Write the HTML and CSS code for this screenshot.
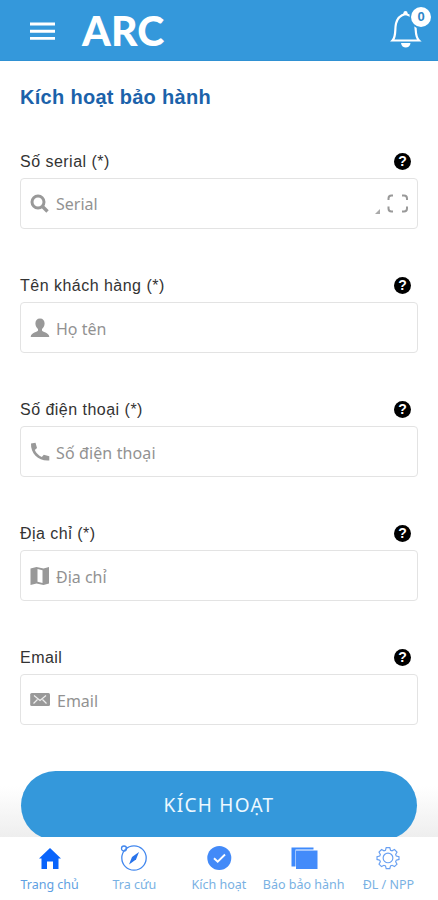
FILE: index.html
```html
<!DOCTYPE html>
<html lang="vi">
<head>
<meta charset="utf-8">
<meta name="viewport" content="width=device-width, initial-scale=1">
<title>ARC</title>
<link rel="stylesheet" href="styles.css">
</head>
<body>
<div class="app">
  <header class="topbar">
    <svg class="menu" viewBox="0 0 26 20"><path d="M0 3h25M0 10.200h25M0 17.400h25" stroke="#fff" stroke-width="2.900"/></svg>
    <span class="brand">ARC</span>
    <div class="bell">
      <svg width="34" height="40" viewBox="0 0 34 40"><path d="M3.500 30.500C7.500 26 5.500 20 7 13.500C8.300 8 12 5 16.500 4C21 5 25 8 26 13.500C27.500 20 25.500 26 30 30.500Z" fill="none" stroke="#fff" stroke-width="2.200"/><circle cx="16.500" cy="3.200" r="2.100" fill="#fff"/><path d="M12 33h9.500c-.5 6-9 6-9.500 0z" fill="#fff"/></svg>
      <span class="count">0</span>
    </div>
  </header>
  <main class="content">
    <h1 class="title">Kích hoạt bảo hành</h1>
    <section class="group">
      <div class="caption"><span class="label">Số serial (*)</span><span class="help">?</span></div>
      <div class="field">
        <svg class="icon" viewBox="0 0 20 20"><circle cx="8" cy="8" r="6" fill="none" stroke="#999" stroke-width="3"/><path d="M12.500 12.500l5 5" stroke="#999" stroke-width="3.400"/></svg>
        <span class="hint h-serial">Serial</span>
        <svg class="scan" width="36" height="26" viewBox="0 0 36 26"><path d="M6 18v5H1z" fill="#aaa"/><path d="M14.500 9V7.500q0-3 3-3H19M28 4.500h2q3 0 3 3V9M33 15.500v2q0 3-3 3h-2M19 20.500h-1.500q-3 0-3-3v-2" fill="none" stroke="#999" stroke-width="2"/></svg>
      </div>
    </section>
    <section class="group">
      <div class="caption"><span class="label">Tên khách hàng (*)</span><span class="help">?</span></div>
      <div class="field">
        <svg class="icon" viewBox="0 0 20 20"><path d="M10 .5c3 0 4.600 2 4.600 5 0 2.500-1.300 4.500-2.600 5.500v1.600c0 1.600 7 1.800 7.300 6.400H.7c.3-4.600 7.300-4.800 7.300-6.400V11C6.700 10 5.400 8 5.400 5.500c0-3 1.600-5 4.600-5z" fill="#999"/></svg>
        <span class="hint">Họ tên</span>
      </div>
    </section>
    <section class="group">
      <div class="caption"><span class="label">Số điện thoại (*)</span><span class="help">?</span></div>
      <div class="field">
        <svg class="icon" viewBox="0 0 20 20"><path d="M1 1.500L5.500.8 7 6 4.800 8c1.300 3 3.800 5.500 7 7l2-2.300 5.500 1.600v4.200C9 19.500.5 12 1 1.500z" fill="#999"/></svg>
        <span class="hint h-phone">Số điện thoại</span>
      </div>
    </section>
    <section class="group">
      <div class="caption"><span class="label">Địa chỉ (*)</span><span class="help">?</span></div>
      <div class="field">
        <svg class="icon" viewBox="0 0 20 20"><path d="M.5 2.500L6.500 1l7 1.500L19 1v16.500L13.500 19l-7-1.500L.5 19z" fill="#999"/><path d="M7.500 3l5 1.200V17l-5-1.200z" fill="#fff"/></svg>
        <span class="hint">Địa chỉ</span>
      </div>
    </section>
    <section class="group">
      <div class="caption"><span class="label">Email</span><span class="help">?</span></div>
      <div class="field">
        <svg class="icon" viewBox="0 0 20 20"><rect x=".2" y="3" width="19.800" height="13" rx="1.500" fill="#999"/><path d="M4 5.500l6 5 6-5M3.500 13.500l4-4M16.500 13.500l-4-4" fill="none" stroke="#eee" stroke-width="1.200"/></svg>
        <span class="hint h-email">Email</span>
      </div>
    </section>
    <div class="action"><button class="submit">KÍCH HOẠT</button></div>
  </main>
  <nav class="tabs">
    <a class="tab tab-home"><svg width="30" height="30" viewBox="0 0 30 30"><path d="M15 5l11 10.500h-2.500V26H18v-7.500h-6V26H6.500V15.500H4z" fill="#0964fb"/></svg><span>Trang chủ</span></a>
    <a class="tab"><svg width="30" height="30" viewBox="0 0 30 30"><g fill="none" stroke="#4388ee" stroke-width="1.300"><circle cx="15" cy="15" r="12.200"/><circle cx="5" cy="5.500" r="2.500"/></g><path d="M20 9l-3 7.500-7 5 3-7.500z" fill="#2873ea"/></svg><span>Tra cứu</span></a>
    <a class="tab"><svg width="30" height="30" viewBox="0 0 30 30"><circle cx="15.300" cy="15" r="12" fill="#438af8"/><path d="M10 15.200l3.700 3.500 7.300-7.200" fill="none" stroke="#fff" stroke-width="1.900"/></svg><span>Kích hoạt</span></a>
    <a class="tab"><svg width="30" height="30" viewBox="0 0 30 30"><path d="M2.500 4.500h22v2h-18v17h-4z" fill="#3e8afc"/><path d="M7 7.500h21.500V26H7z" fill="#438bfa"/></svg><span>Báo bảo hành</span></a>
    <a class="tab"><svg width="30" height="30" viewBox="0 0 30 30"><g transform="translate(1.500 .5) scale(.9)" fill="none" stroke="#69a0f2" stroke-width="1.300"><path d="M13 4.500h4l.8 3 1.700.7 2.700-1.500 2.800 2.800-1.500 2.700.7 1.700 3 .8v3l-3 .8-.7 1.700 1.500 2.700-2.800 2.800-2.700-1.500-1.700.7-.8 3h-4l-.8-3-1.700-.7-2.700 1.500L5 22.900l1.500-2.700-.7-1.700-3-.8v-3l3-.8.7-1.700L5 9.500l2.800-2.800 2.700 1.500 1.700-.7z"/><circle cx="15" cy="16" r="5.400"/></g></svg><span>ĐL / NPP</span></a>
  </nav>
</div>
</body>
</html>
```
FILE: styles.css
```css
* { box-sizing: border-box; }
body { margin: 0; background: #fff; font-family: "Liberation Sans", sans-serif; }
.app { height: 900px; display: flex; flex-direction: column; overflow: hidden; }
.topbar { height: 61px; flex: none; display: flex; align-items: center; padding: 0 5px 0 30px; background: #3498db; border-bottom: 1px solid #2f91d3; color: #fff; }
.menu { width: 26px; height: 20px; margin-top: 1px; }
.brand { margin-left: 26px; font: 900 41px/60px Lato, sans-serif; letter-spacing: .2px; padding-top: 1px; }
.bell { margin-left: auto; position: relative; width: 44px; height: 40px; }
.bell svg { display: block; }
.count { position: absolute; left: 22px; top: -3px; width: 20px; height: 20px; border-radius: 50%; background: #fff; box-shadow: 0 0 0 1.500px #3498db; color: #2d85c8; font-size: 13px; line-height: 20px; font-weight: 700; text-align: center; }
.content { flex: 1; min-height: 0; overflow: hidden; padding: 0 20px; background: linear-gradient(#fff 725px, #eee 776px); }
.title { margin: 24px 0 42px; font-size: 20px; line-height: 24px; color: #1b62aa; white-space: nowrap; letter-spacing: .3px; }
.group { height: 124px; }
.caption { height: 27px; display: flex; align-items: flex-start; justify-content: space-between; padding-right: 7px; }
.label { padding-top: 1px; font-size: 16px; line-height: 20px; color: #333; white-space: nowrap; letter-spacing: .48px; }
.help { width: 17px; height: 17px; margin-top: 2px; border-radius: 50%; background: #000; color: #fff; text-align: center; font-size: 14px; line-height: 17px; font-weight: 700; }
.field { height: 51px; display: flex; align-items: center; padding: 0 7px 0 9px; border: 1.500px solid #e3e3e3; border-radius: 4px; background: #fff; }
.icon { width: 20px; height: 20px; margin-right: 6px; }
.hint { font: 16px/24px "Noto Sans", sans-serif; color: #929292; white-space: nowrap; padding-top: 2px; }
.h-serial { padding-top: 0; }
.h-phone { letter-spacing: .12px; }
.h-email { margin-left: 1px; }
.scan { margin-left: auto; }
.action { padding: 0 1px; }
.submit { display: block; width: 100%; height: 69px; padding: 0; border: 0; border-radius: 35px; background: #3498db; color: #edf8ff; font: 19px/69px "Noto Sans", sans-serif; letter-spacing: 1.300px; }
.tabs { height: 63px; flex: none; display: flex; justify-content: center; background: #fff; padding: 6px 7px 0; }
.tab { width: 84.700px; flex: none; display: flex; flex-direction: column; align-items: center; color: #79b1e3; font: 12.500px/18px "Noto Sans", sans-serif; white-space: nowrap; }
.tab span { margin-top: 3px; }
.tab-home { color: #5e9fe2; }
```
